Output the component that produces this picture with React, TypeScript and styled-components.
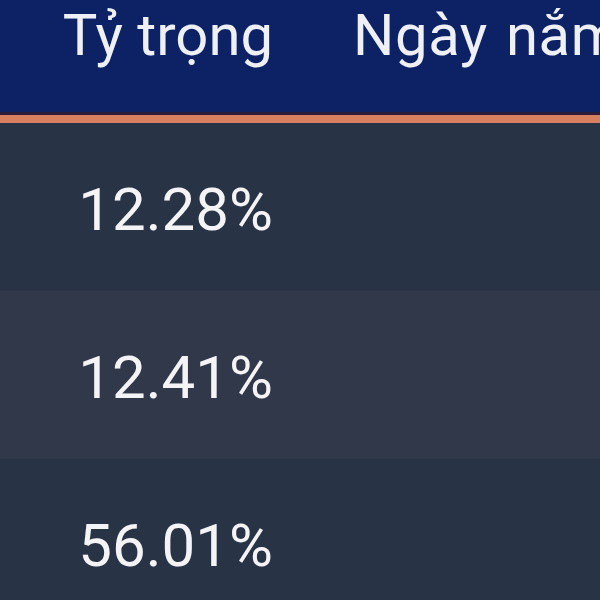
import styled, { createGlobalStyle } from 'styled-components';

const GlobalStyle = createGlobalStyle`
  html, body {
    margin: 0;
    padding: 0;
    background: #283445;
    overflow: hidden;
  }
  body {
    font-family: Roboto, "Noto Sans", sans-serif;
  }
`;

const ScTable = styled.div`
  width: 600px;
  display: flex;
  flex-direction: column;
`;

const ScHeader = styled.div`
  display: flex;
  height: 112px;
  background-color: #0c2264;
  border-bottom: 3px solid #2c1a3a;
  box-shadow: 0 8px 0 0 #d6805f;
  position: relative;
  z-index: 1;
  margin-bottom: 8px;
`;

type RowProps = { $alt: boolean };
const ScRow = styled.div<RowProps>`
  display: flex;
  align-items: center;
  height: 168px;
  padding-top: 4px;
  box-sizing: border-box;
  background-color: ${p => (p.$alt ? '#303849' : '#283445')};
`;

type CellProps = { $first?: boolean };
const ScCell = styled.div<CellProps>`
  flex: ${p => (p.$first ? '0 0 300px' : '1 1 auto')};
  box-sizing: border-box;
  padding: ${p => (p.$first ? '0 27px 0 0' : '0 0 0 54px')};
  text-align: ${p => (p.$first ? 'right' : 'left')};
  white-space: nowrap;
  overflow: hidden;
  font-size: 60px;
  line-height: normal;
  color: #f4f4f6;
`;

const ScHeadCell = styled(ScCell)`
  font-size: 58px;
  padding-top: 1px;
  color: #eef0f6;
  padding-left: ${p => (p.$first ? '0' : '53px')};
  letter-spacing: ${p => (p.$first ? '0' : '0.6px')};
  word-spacing: ${p => (p.$first ? '0' : '3px')};
`;

const rows = ['12.28%', '12.41%', '56.01%'];

function App() {
  return (
    <>
      <GlobalStyle />
      <ScTable>
        <ScHeader>
          <ScHeadCell $first>{'Tỷ trọng'}</ScHeadCell>
          <ScHeadCell>{'Ngày nắm giữ'}</ScHeadCell>
        </ScHeader>
        {rows.map((r, i) => (
          <ScRow key={i} $alt={i % 2 === 1}>
            <ScCell $first>{r}</ScCell>
            <ScCell />
          </ScRow>
        ))}
      </ScTable>
    </>
  );
}

export default App;
